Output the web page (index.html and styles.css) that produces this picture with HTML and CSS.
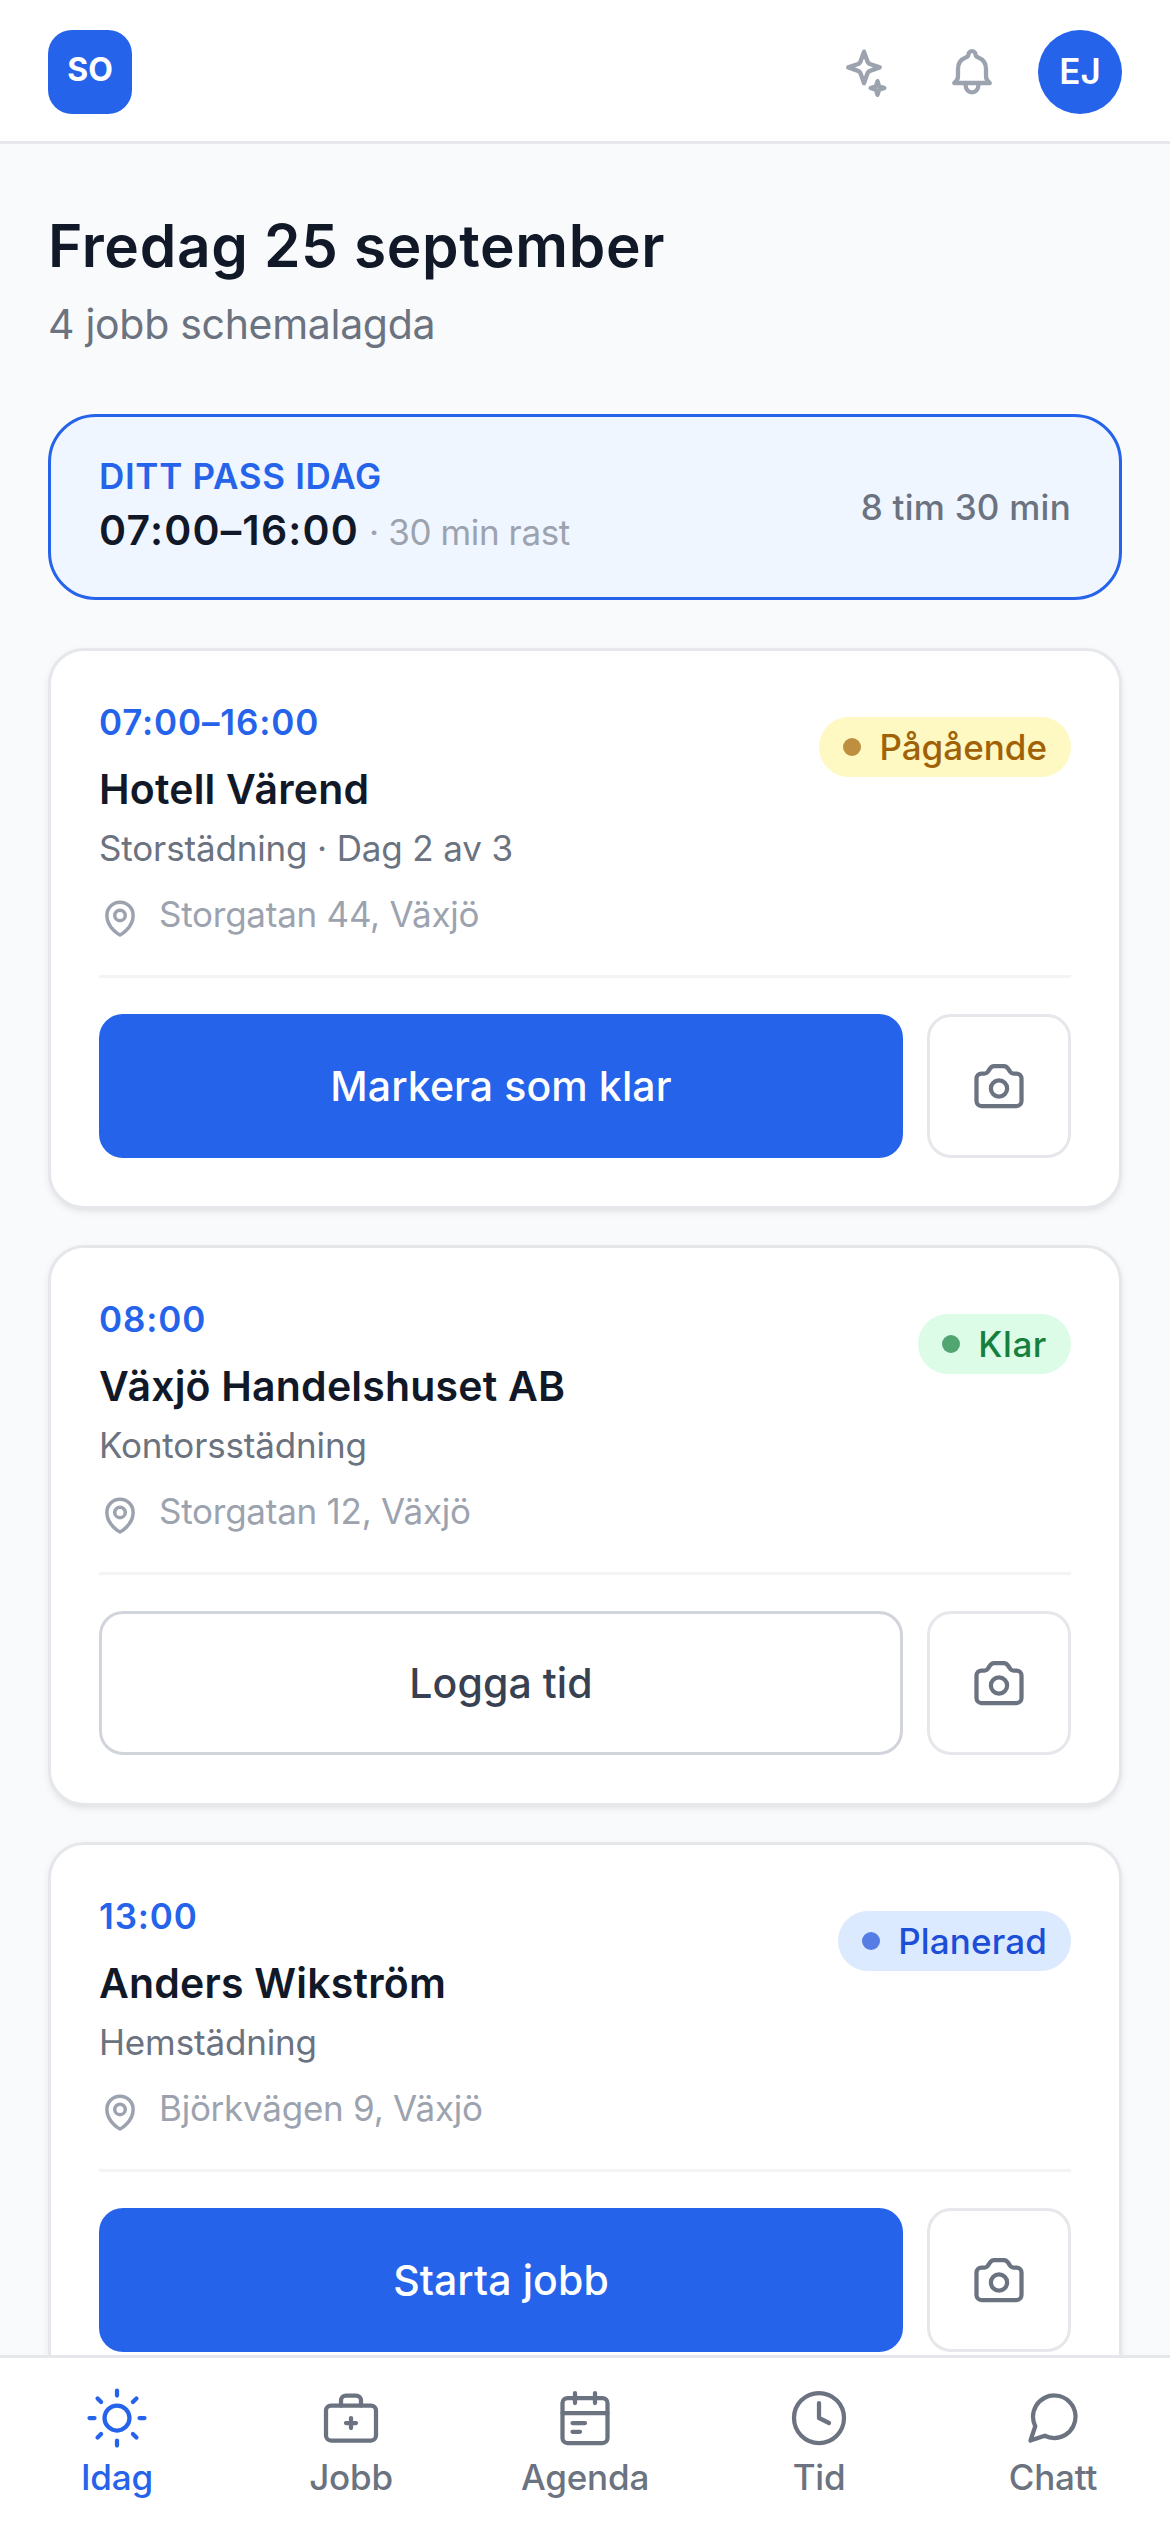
FILE: index.html
```html
<!DOCTYPE html>
<html lang="sv">
<head>
<meta charset="utf-8">
<title>Idag</title>
<link rel="stylesheet" href="styles.css">
</head>
<body>
<svg class="sprite" aria-hidden="true">
  <symbol id="pin" viewBox="0 0 24 24"><path d="M15 10.5a3 3 0 1 1-6 0 3 3 0 0 1 6 0Z"/><path d="M19.5 10.5c0 7.142-7.5 11.25-7.5 11.25S4.5 17.642 4.5 10.5a7.5 7.5 0 1 1 15 0Z"/></symbol>
  <symbol id="camera" viewBox="0 0 24 24"><path d="M5 7h1.2c.6 0 1.1-.3 1.4-.8L8.4 5c.4-.6.9-1 1.6-1h4c.7 0 1.2.4 1.6 1l.8 1.2c.3.5.8.8 1.4.8H19a2 2 0 0 1 2 2v9a2 2 0 0 1-2 2H5a2 2 0 0 1-2-2V9a2 2 0 0 1 2-2Z"/><circle cx="12" cy="13" r="3.25"/></symbol>
</svg>
<div class="app">
  <header class="topbar">
    <div class="logo"><span>SO</span></div>
    <div class="tools">
      <svg class="tool sparkle" viewBox="0 0 60 60"><path d="M27 9.6l3.2 9.2a5 5 0 0 0 3.4 3.4l9.2 3.2-9.2 3.2a5 5 0 0 0-3.4 3.4L27 41.2l-3.2-9.2a5 5 0 0 0-3.4-3.4l-9.2-3.2 9.2-3.2a5 5 0 0 0 3.4-3.4Z"/><path d="M40.5 39.1l1.7 5.2 5.2 1.7-5.2 1.7-1.7 5.2-1.7-5.2-5.2-1.7 5.2-1.7Z"/></svg>
      <svg class="tool bell" viewBox="0 0 60 60"><path d="M12.2 41c2-1.8 3.8-3.6 3.8-6.5V27c0-5.4 3.2-9.6 7.6-11.4 1.8-.7 2.8-1.3 2.8-2.8a3.6 3.6 0 0 1 7.2 0c0 1.5 1 2.1 2.8 2.8C40.8 17.4 44 21.6 44 27v7.5c0 2.9 1.8 4.7 3.8 6.5Z"/><path d="M23.7 41v3a6.3 6.3 0 0 0 12.6 0v-3"/></svg>
      <div class="avatar">EJ</div>
    </div>
  </header>

  <main class="content">
    <h1 class="title">Fredag 25 september</h1>
    <p class="subtitle">4 jobb schemalagda</p>

    <section class="shift">
      <div>
        <div class="shift-label">DITT PASS IDAG</div>
        <div class="shift-row"><span class="shift-time">07:00–16:00</span><span class="shift-break">· 30 min rast</span></div>
      </div>
      <div class="shift-total">8 tim 30 min</div>
    </section>

    <article class="card">
      <div class="card-head">
        <div>
          <div class="time">07:00–16:00</div>
          <h2 class="name">Hotell Värend</h2>
          <div class="service">Storstädning · Dag 2 av 3</div>
          <div class="address"><svg class="pin"><use href="#pin"/></svg><span>Storgatan 44, Växjö</span></div>
        </div>
        <span class="badge ongoing"><i class="dot"></i><span>Pågående</span></span>
      </div>
      <div class="actions">
        <button class="btn primary">Markera som klar</button>
        <button class="btn camera"><svg><use href="#camera"/></svg></button>
      </div>
    </article>

    <article class="card">
      <div class="card-head">
        <div>
          <div class="time">08:00</div>
          <h2 class="name">Växjö Handelshuset AB</h2>
          <div class="service">Kontorsstädning</div>
          <div class="address"><svg class="pin"><use href="#pin"/></svg><span>Storgatan 12, Växjö</span></div>
        </div>
        <span class="badge done"><i class="dot"></i><span>Klar</span></span>
      </div>
      <div class="actions">
        <button class="btn outline">Logga tid</button>
        <button class="btn camera"><svg><use href="#camera"/></svg></button>
      </div>
    </article>

    <article class="card">
      <div class="card-head">
        <div>
          <div class="time">13:00</div>
          <h2 class="name">Anders Wikström</h2>
          <div class="service">Hemstädning</div>
          <div class="address"><svg class="pin"><use href="#pin"/></svg><span>Björkvägen 9, Växjö</span></div>
        </div>
        <span class="badge planned"><i class="dot"></i><span>Planerad</span></span>
      </div>
      <div class="actions">
        <button class="btn primary">Starta jobb</button>
        <button class="btn camera"><svg><use href="#camera"/></svg></button>
      </div>
    </article>
  </main>

  <nav class="tabs">
    <a class="tab active"><svg viewBox="0 0 24 24"><circle cx="12" cy="12" r="5"/><path d="M12 1v2M12 21v2M4.22 4.22l1.42 1.42M18.36 18.36l1.42 1.42M1 12h2M21 12h2M4.22 19.78l1.42-1.42M18.36 5.64l1.42-1.42"/></svg><span>Idag</span></a>
    <a class="tab"><svg viewBox="0 0 24 24"><rect x="2" y="7" width="20" height="14" rx="2"/><path d="M16 7V5a2 2 0 0 0-2-2h-4a2 2 0 0 0-2 2v2M12 12v4M10 14h4"/></svg><span>Jobb</span></a>
    <a class="tab"><svg viewBox="0 0 24 24"><rect x="3" y="4" width="18" height="18" rx="2"/><path d="M16 2v4M8 2v4M3 10h18M7 14h5M7 17.5h3"/></svg><span>Agenda</span></a>
    <a class="tab"><svg viewBox="0 0 24 24"><circle cx="12" cy="12" r="10"/><path d="M12 6v6l4 2"/></svg><span>Tid</span></a>
    <a class="tab"><svg viewBox="0 0 24 24"><path d="M21 11.5a8.38 8.38 0 0 1-.9 3.8 8.5 8.5 0 0 1-7.6 4.7 8.38 8.38 0 0 1-3.8-.9L3 21l1.9-5.7a8.38 8.38 0 0 1-.9-3.8 8.5 8.5 0 0 1 4.7-7.6 8.38 8.38 0 0 1 3.8-.9h.5a8.48 8.48 0 0 1 8 8v.5z"/></svg><span>Chatt</span></a>
  </nav>
</div>
</body>
</html>
```

FILE: styles.css
```css
* { box-sizing: border-box; margin: 0; padding: 0; }

body {
  font-family: Inter, "Liberation Sans", sans-serif;
  font-size: 35px;
  line-height: 48px;
  background: #f9fafb;
  color: #111827;
}

svg {
  display: block;
  flex: none;
  fill: none;
  stroke: currentColor;
  stroke-width: 1.7;
  stroke-linecap: round;
  stroke-linejoin: round;
}

.sprite { display: none; }

.app {
  width: 1170px;
  height: 2532px;
  display: flex;
  flex-direction: column;
  overflow: hidden;
}

.topbar {
  flex: none;
  height: 144px;
  padding: 0 48px;
  display: flex;
  align-items: center;
  justify-content: space-between;
  background: #fff;
  border-bottom: 3px solid #e5e7eb;
}

.logo {
  width: 84px;
  height: 84px;
  margin-top: 3px;
  padding-bottom: 5px;
  border-radius: 24px;
  background: #2563eb;
  color: #fff;
  font-size: 32px;
  font-weight: 700;
  display: flex;
  align-items: center;
  justify-content: center;
}

.tools { display: flex; align-items: center; margin-top: 3px; color: #9ca3af; }
.tool { width: 60px; height: 60px; stroke-width: 4.3; }
.sparkle { margin-right: 45px; }
.bell { margin-right: 36px; }

.avatar {
  width: 84px;
  height: 84px;
  padding-bottom: 2px;
  border-radius: 50%;
  background: #2563eb;
  color: #fff;
  font-weight: 600;
  display: flex;
  align-items: center;
  justify-content: center;
}

.content {
  flex: 1;
  min-height: 0;
  overflow: hidden;
  padding: 64px 48px 0;
}

.title { font-size: 58.6px; line-height: 75px; font-weight: 600; letter-spacing: .65px; white-space: nowrap; }
.subtitle { margin-top: 11px; font-size: 41px; line-height: 60px; letter-spacing: -.3px; color: #6b7280; }

.shift {
  height: 186px;
  margin-top: 60px;
  padding: 0 48px;
  display: flex;
  align-items: center;
  justify-content: space-between;
  background: #eff6ff;
  border: 3px solid #2563eb;
  border-radius: 48px;
}

.shift-label { color: #2563eb; font-weight: 600; letter-spacing: .7px; }
.shift-row { display: flex; align-items: baseline; line-height: 60px; }
.shift-time { font-size: 41px; font-weight: 600; letter-spacing: 1.2px; }
.shift-break { margin-left: 10px; letter-spacing: -.4px; color: #9ca3af; }
.shift-total { color: #6b7280; font-weight: 500; letter-spacing: .25px; }

.card {
  height: 561px;
  margin-top: 36px;
  padding: 48px;
  background: #fff;
  border: 3px solid #e5e7eb;
  border-radius: 36px;
  box-shadow: 0 3px 9px rgba(0, 0, 0, .06), 0 3px 6px -3px rgba(0, 0, 0, .08);
}
.shift + .card { margin-top: 48px; }

.card-head {
  height: 279px;
  display: flex;
  justify-content: space-between;
  align-items: flex-start;
  border-bottom: 3px solid #f3f4f6;
}

.time { margin-top: -1px; color: #2563eb; font-weight: 600; letter-spacing: .85px; }
.name { margin-top: 13px; font-size: 41px; line-height: 60px; font-weight: 600; letter-spacing: .2px; }
.service { margin-top: 5px; color: #6b7280; letter-spacing: -.15px; }
.address { margin-top: 18px; display: flex; align-items: flex-start; gap: 18px; letter-spacing: -.25px; color: #9ca3af; }
.pin { width: 42px; height: 42px; margin-top: 7px; stroke-width: 2; }

.badge {
  height: 60px;
  margin-top: 18px;
  padding: 0 24px;
  display: flex;
  align-items: center;
  gap: 18px;
  border-radius: 30px;
  font-weight: 500;
}
.dot { width: 18px; height: 18px; border-radius: 50%; background: currentColor; opacity: .7; }
.ongoing { background: #fef9c3; color: #a16207; }
.done { background: #dcfce7; color: #15803d; letter-spacing: .6px; }
.planned { background: #dbeafe; color: #1d4ed8; letter-spacing: .15px; }

.actions { margin-top: 36px; display: flex; gap: 24px; }
.btn {
  flex: 1;
  height: 144px;
  border: 0;
  border-radius: 24px;
  background: #fff;
  font-family: inherit;
  font-size: 41px;
  font-weight: 500;
  letter-spacing: .1px;
}
.primary { background: #2563eb; color: #fff; }
.outline { border: 3px solid #d1d5db; color: #374151; }
.camera {
  flex: none;
  width: 144px;
  display: flex;
  align-items: center;
  justify-content: center;
  border: 3px solid #e5e7eb;
  color: #6b7280;
}
.camera svg { width: 60px; height: 60px; }

.tabs {
  flex: none;
  height: 177px;
  display: grid;
  grid-template-columns: repeat(5, 1fr);
  background: #fff;
  border-top: 3px solid #e5e7eb;
}
.tab {
  padding-top: 30px;
  display: flex;
  flex-direction: column;
  align-items: center;
  gap: 5px;
  color: #6b7280;
  font-weight: 500;
  letter-spacing: -.2px;
}
.tab svg { width: 60px; height: 60px; overflow: visible; }
.active { color: #2563eb; }
```
